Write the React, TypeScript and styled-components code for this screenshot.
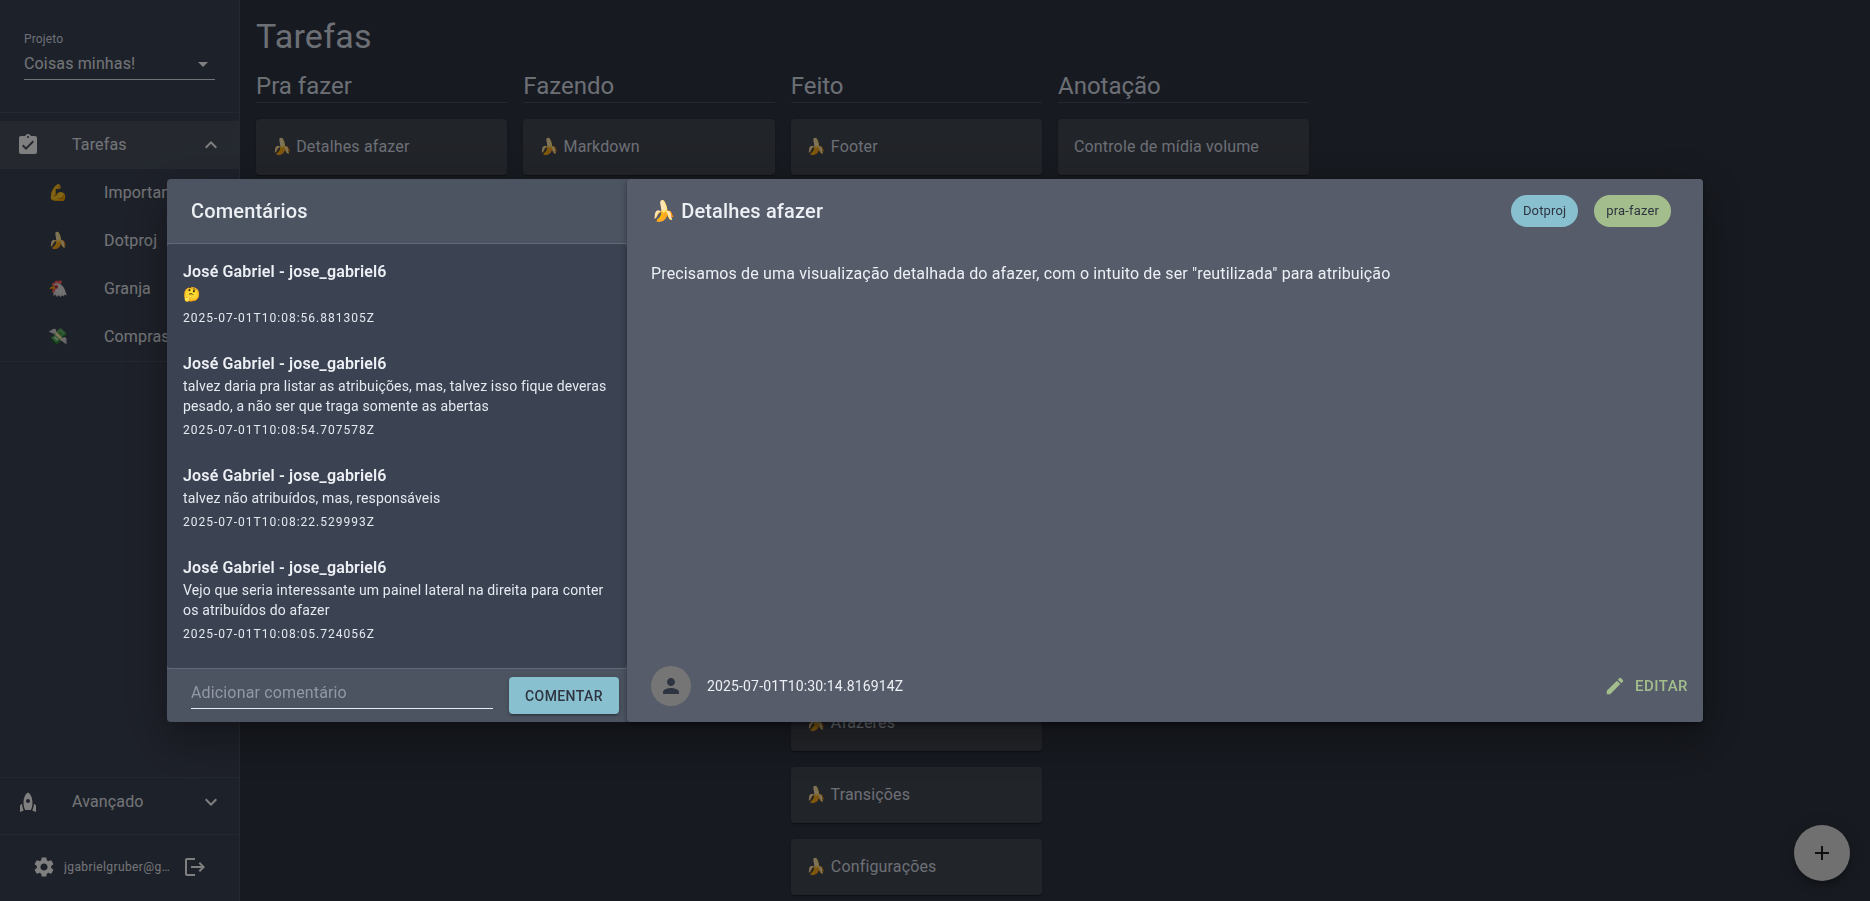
import styled, { createGlobalStyle } from "styled-components"

const GlobalStyle = createGlobalStyle`
  html, body {
    margin: 0;
    padding: 0;
    height: 100%;
    background: #2e3440;
    color: #d8dee9;
    font-family: Roboto, "Noto Color Emoji", sans-serif;
    line-height: 1.5;
    letter-spacing: 0.15px;
  }
  * {
    box-sizing: border-box;
  }
`

const paths = {
  tasks:
    "M19 3h-4.18C14.4 1.84 13.3 1 12 1c-1.3 0-2.4.84-2.82 2H5c-1.1 0-2 .9-2 2v14c0 1.1.9 2 2 2h14c1.1 0 2-.9 2-2V5c0-1.1-.9-2-2-2zm-7 0c.55 0 1 .45 1 1s-.45 1-1 1-1-.45-1-1 .45-1 1-1zm-2 14l-4-4 1.41-1.41L10 14.17l6.59-6.59L18 9l-8 8z",
  rocket:
    "M12 2.5s4.5 2.04 4.5 10.5c0 2.49-1.04 5.57-1.6 7H9.1c-.56-1.43-1.6-4.51-1.6-7C7.5 4.54 12 2.5 12 2.5zm2 8.5c0-1.1-.9-2-2-2s-2 .9-2 2 .9 2 2 2 2-.9 2-2zm-6.31 9.52c-.48-1.23-1.52-4.17-1.67-6.87l-1.13.75c-.56.38-.89 1-.89 1.67V22l3.69-1.48zM20 22v-5.93c0-.67-.33-1.29-.89-1.66l-1.13-.75c-.15 2.69-1.2 5.64-1.67 6.87L20 22z",
  less: "M12 8l-6 6 1.41 1.41L12 10.83l4.59 4.58L18 14z",
  more: "M16.59 8.59 12 13.17 7.41 8.59 6 10l6 6 6-6z",
  settings:
    "M19.14 12.94c.04-.3.06-.61.06-.94 0-.32-.02-.64-.07-.94l2.03-1.58c.18-.14.23-.41.12-.61l-1.92-3.32c-.12-.22-.37-.29-.59-.22l-2.39.96c-.5-.38-1.03-.7-1.62-.94l-.36-2.54c-.04-.24-.24-.41-.48-.41h-3.84c-.24 0-.43.17-.47.41l-.36 2.54c-.59.24-1.13.57-1.62.94l-2.39-.96c-.22-.08-.47 0-.59.22L2.74 8.87c-.12.21-.08.47.12.61l2.03 1.58c-.05.3-.09.63-.09.94s.02.64.07.94l-2.03 1.58c-.18.14-.23.41-.12.61l1.92 3.32c.12.22.37.29.59.22l2.39-.96c.5.38 1.03.7 1.62.94l.36 2.54c.05.24.24.41.48.41h3.84c.24 0 .44-.17.47-.41l.36-2.54c.59-.24 1.13-.56 1.62-.94l2.39.96c.22.08.47 0 .59-.22l1.92-3.32c.12-.22.07-.47-.12-.61l-2.01-1.58zM12 15.6c-1.98 0-3.6-1.62-3.6-3.6s1.62-3.6 3.6-3.6 3.6 1.62 3.6 3.6-1.62 3.6-3.6 3.6z",
  logout:
    "M17 7l-1.41 1.41L18.17 11H8v2h10.17l-2.58 2.58L17 17l5-5zM4 5h8V3H4c-1.1 0-2 .9-2 2v14c0 1.1.9 2 2 2h8v-2H4V5z",
  person:
    "M12 12c2.21 0 4-1.79 4-4s-1.79-4-4-4-4 1.79-4 4 1.79 4 4 4zm0 2c-2.67 0-8 1.34-8 4v2h16v-2c0-2.66-5.33-4-8-4z",
  edit: "M3 17.25V21h3.75L17.81 9.94l-3.75-3.75L3 17.25zM20.71 7.04c.39-.39.39-1.02 0-1.41l-2.34-2.34a.9959.9959 0 0 0-1.41 0l-1.83 1.83 3.75 3.75 1.83-1.83z",
  add: "M19 13h-6v6h-2v-6H5v-2h6V5h2v6h6v2z",
  drop: "M7 10l5 5 5-5z",
}

function Icon({ name }: { name: keyof typeof paths }) {
  return (
    <Svg viewBox="0 0 24 24" fill="currentColor">
      <path d={paths[name]} />
    </Svg>
  )
}

const columns = [
  { title: "Pra fazer", cards: ["🍌 Detalhes afazer"] },
  { title: "Fazendo", cards: ["🍌 Markdown"] },
  {
    title: "Feito",
    cards: [
      "🍌 Footer",
      "🍌",
      "🍌",
      "🍌",
      "🍌",
      "🍌",
      "🍌",
      "🍌",
      "🍌 Afazeres",
      "🍌 Transições",
      "🍌 Configurações",
    ],
  },
  { title: "Anotação", cards: ["Controle de mídia volume"] },
]

const projects = [
  { emoji: "💪", name: "Importantes" },
  { emoji: "🍌", name: "Dotproj" },
  { emoji: "🐔", name: "Granja" },
  { emoji: "💸", name: "Compras" },
]

const comments = [
  {
    body: "🤔",
    date: "2025-07-01T10:08:56.881305Z",
  },
  {
    body: "talvez daria pra listar as atribuições, mas, talvez isso fique deveras pesado, a não ser que traga somente as abertas",
    date: "2025-07-01T10:08:54.707578Z",
  },
  {
    body: "talvez não atribuídos, mas, responsáveis",
    date: "2025-07-01T10:08:22.529993Z",
  },
  {
    body: "Vejo que seria interessante um painel lateral na direita para conter os atribuídos do afazer",
    date: "2025-07-01T10:08:05.724056Z",
  },
]

export default function App() {
  return (
    <>
      <GlobalStyle />
      <Layout>
        <Sidebar>
          <ProjectBlock>
            <ProjectLabel>Projeto</ProjectLabel>
            <ProjectSelect>
              Coisas minhas!
              <Icon name="drop" />
            </ProjectSelect>
          </ProjectBlock>
          <NavList>
            <NavRow $selected>
              <NavIcon>
                <Icon name="tasks" />
              </NavIcon>
              <NavText>Tarefas</NavText>
              <Icon name="less" />
            </NavRow>
            {projects.map((p) => (
              <SubRow key={p.name}>
                <SubEmoji>{p.emoji}</SubEmoji>
                <NavText>{p.name}</NavText>
              </SubRow>
            ))}
          </NavList>
          <Spacer />
          <AdvancedBlock>
            <NavRow>
              <NavIcon>
                <Icon name="rocket" />
              </NavIcon>
              <NavText>Avançado</NavText>
              <Icon name="more" />
            </NavRow>
          </AdvancedBlock>
          <UserBar>
            <Icon name="settings" />
            <UserMail>jgabrielgruber@gmail.com</UserMail>
            <Icon name="logout" />
          </UserBar>
        </Sidebar>
        <Main>
          <PageTitle>Tarefas</PageTitle>
          <Board>
            {columns.map((col) => (
              <Column key={col.title}>
                <ColumnTitle>{col.title}</ColumnTitle>
                {col.cards.map((card, i) => (
                  <TaskCard key={i}>{card}</TaskCard>
                ))}
              </Column>
            ))}
          </Board>
        </Main>
        <Fab>
          <Icon name="add" />
        </Fab>
      </Layout>
      <Overlay>
        <Dialog>
          <CommentsPanel>
            <CommentsHead>Comentários</CommentsHead>
            <CommentList>
              {comments.map((c) => (
                <Comment key={c.date}>
                  <CommentAuthor>José Gabriel - jose_gabriel6</CommentAuthor>
                  <CommentBody>{c.body}</CommentBody>
                  <CommentDate>{c.date}</CommentDate>
                </Comment>
              ))}
            </CommentList>
            <CommentForm>
              <CommentInput placeholder="Adicionar comentário" />
              <CommentButton>Comentar</CommentButton>
            </CommentForm>
          </CommentsPanel>
          <DetailPanel>
            <DetailHead>
              <DetailTitle>🍌 Detalhes afazer</DetailTitle>
              <Chip $color="#88c0d0">Dotproj</Chip>
              <Chip $color="#a3be8c">pra-fazer</Chip>
            </DetailHead>
            <DetailBody>
              Precisamos de uma visualização detalhada do afazer, com o intuito
              de ser "reutilizada" para atribuição
            </DetailBody>
            <DetailFoot>
              <Avatar>
                <Icon name="person" />
              </Avatar>
              <DetailDate>2025-07-01T10:30:14.816914Z</DetailDate>
              <EditButton>
                <Icon name="edit" />
                Editar
              </EditButton>
            </DetailFoot>
          </DetailPanel>
        </Dialog>
      </Overlay>
    </>
  )
}

const Svg = styled.svg`
  width: 24px;
  height: 24px;
  flex-shrink: 0;
  display: block;
`

const Layout = styled.div`
  display: flex;
  height: 100vh;
  overflow: hidden;
`

const Sidebar = styled.aside`
  width: 240px;
  flex-shrink: 0;
  display: flex;
  flex-direction: column;
  background: #3b4252;
  border-right: 1px solid #4c5361;
  color: #e5e9f0;
`

const ProjectBlock = styled.div`
  height: 113px;
  padding: 31px 24px 0;
  border-bottom: 1px solid #4a5160;
`

const ProjectLabel = styled.div`
  font-size: 12px;
  line-height: 16px;
  color: #d8dee9;
`

const ProjectSelect = styled.div`
  display: flex;
  align-items: center;
  justify-content: space-between;
  width: 191px;
  height: 32px;
  margin-top: 1px;
  font-size: 16px;
  border-bottom: 1px solid #e5e9f0;
  svg {
    color: #fff;
  }
`

const NavList = styled.nav`
  padding-top: 8px;
  border-bottom: 1px solid #4a5160;
`

const NavRow = styled.div<{ $selected?: boolean }>`
  display: flex;
  align-items: center;
  height: 48px;
  padding: 0 16px;
  background: ${(p) => (p.$selected ? "#4a515f" : "transparent")};
  svg {
    color: #fff;
  }
`

const NavIcon = styled.div`
  width: 56px;
  flex-shrink: 0;
`

const NavText = styled.span`
  flex: 1;
  font-size: 16px;
  white-space: nowrap;
`

const SubRow = styled.div`
  display: flex;
  align-items: center;
  height: 48px;
  padding-left: 48px;
`

const SubEmoji = styled.span`
  width: 56px;
  flex-shrink: 0;
  font-size: 16px;
`

const Spacer = styled.div`
  flex: 1;
`

const AdvancedBlock = styled.div`
  padding-bottom: 8px;
  border-top: 1px solid #4a5160;
  border-bottom: 1px solid #4a5160;
`

const UserBar = styled.div`
  display: flex;
  align-items: center;
  height: 66px;
  padding: 0 0 3px 32px;
  svg {
    color: #fff;
  }
`

const UserMail = styled.span`
  width: 108px;
  margin: 0 11px 0 8px;
  font-size: 12px;
  letter-spacing: 0.4px;
  white-space: nowrap;
  overflow: hidden;
  text-overflow: ellipsis;
`

const Main = styled.main`
  flex: 1;
  padding: 16px;
  overflow: hidden;
`

const PageTitle = styled.h1`
  margin: 0;
  font-size: 34px;
  line-height: 40px;
  font-weight: 400;
  letter-spacing: 0.25px;
`

const Board = styled.div`
  display: grid;
  grid-template-columns: repeat(4, 251.33px);
  column-gap: 16px;
  align-items: start;
  margin-top: 14px;
`

const Column = styled.section`
  display: flex;
  flex-direction: column;
  gap: 16px;
`

const ColumnTitle = styled.h2`
  height: 33px;
  margin: 0;
  font-size: 24px;
  line-height: 32px;
  font-weight: 400;
  letter-spacing: 0;
  border-bottom: 1px solid #4a5160;
`

const TaskCard = styled.div`
  display: flex;
  align-items: center;
  height: 56px;
  flex-shrink: 0;
  padding: 0 16px;
  font-size: 16px;
  color: #d8dee9;
  background: #434852;
  border-radius: 4px;
  box-shadow: 0 2px 1px -1px rgba(0, 0, 0, 0.2), 0 1px 1px rgba(0, 0, 0, 0.14),
    0 1px 3px rgba(0, 0, 0, 0.12);
`

const Fab = styled.div`
  position: fixed;
  right: 20px;
  bottom: 20px;
  width: 56px;
  height: 56px;
  display: flex;
  align-items: center;
  justify-content: center;
  border-radius: 50%;
  background: #e0e0e0;
  color: #1f1f1f;
  box-shadow: 0 3px 5px -1px rgba(0, 0, 0, 0.2), 0 6px 10px rgba(0, 0, 0, 0.14),
    0 1px 18px rgba(0, 0, 0, 0.12);
`

const Overlay = styled.div`
  position: fixed;
  inset: 0;
  display: flex;
  align-items: center;
  justify-content: center;
  background: rgba(0, 0, 0, 0.5);
`

const Dialog = styled.div`
  display: grid;
  grid-template-columns: 460px 1fr;
  width: 1536px;
  height: 543px;
  border-radius: 4px;
  background: #4c5361;
  color: #eceff4;
  box-shadow: 0 11px 15px -7px rgba(0, 0, 0, 0.2),
    0 24px 38px 3px rgba(0, 0, 0, 0.14), 0 9px 46px 8px rgba(0, 0, 0, 0.12);
`

const CommentsPanel = styled.div`
  display: flex;
  flex-direction: column;
  min-height: 0;
`

const CommentsHead = styled.div`
  flex-shrink: 0;
  height: 65px;
  padding: 0 24px 1px;
  display: flex;
  align-items: center;
  font-size: 20px;
  font-weight: 500;
  border-bottom: 1px solid #626875;
`

const CommentList = styled.div`
  flex: 1;
  min-height: 0;
  padding: 16px 16px 0;
  overflow: hidden;
  background: #3b4252;
  border-radius: 4px;
`

const Comment = styled.article`
  margin-bottom: 24px;
`

const CommentAuthor = styled.div`
  font-size: 16px;
  line-height: 24px;
  font-weight: 600;
`

const CommentBody = styled.div`
  font-size: 14px;
  line-height: 20px;
  color: #e5e9f0;
`

const CommentDate = styled.div`
  margin-top: 4px;
  font-size: 12px;
  line-height: 20px;
  letter-spacing: 1px;
  color: #e5e9f0;
`

const CommentForm = styled.div`
  flex-shrink: 0;
  height: 54px;
  display: flex;
  align-items: center;
  padding: 0 8px 0 24px;
  gap: 16px;
  border-top: 1px solid #626875;
`

const CommentInput = styled.input`
  align-self: flex-start;
  width: 302px;
  height: 32px;
  margin-top: 8px;
  padding: 0;
  font: 16px Roboto, sans-serif;
  letter-spacing: 0.15px;
  color: #eceff4;
  background: transparent;
  border: 0;
  border-bottom: 1px solid #e5e9f0;
  outline: none;
  &::placeholder {
    color: #9298a4;
    opacity: 1;
  }
`

const CommentButton = styled.button`
  width: 110px;
  height: 37px;
  padding: 0;
  font: 500 14px Roboto, sans-serif;
  letter-spacing: 0.4px;
  text-transform: uppercase;
  color: #2e3440;
  background: #88c0d0;
  border: 0;
  border-radius: 4px;
  box-shadow: 0 3px 1px -2px rgba(0, 0, 0, 0.2), 0 2px 2px rgba(0, 0, 0, 0.14),
    0 1px 5px rgba(0, 0, 0, 0.12);
`

const DetailPanel = styled.div`
  position: relative;
  display: flex;
  flex-direction: column;
  min-height: 0;
  background: #565c6a;
  border-radius: 4px;
  box-shadow: 0 2px 4px -1px rgba(0, 0, 0, 0.2), 0 4px 5px rgba(0, 0, 0, 0.14),
    0 1px 10px rgba(0, 0, 0, 0.12);
`

const DetailHead = styled.div`
  display: flex;
  align-items: center;
  gap: 16px;
  height: 64px;
  padding: 0 32px 0 24px;
`

const DetailTitle = styled.div`
  flex: 1;
  font-size: 20px;
  font-weight: 500;
`

const Chip = styled.span<{ $color: string }>`
  display: flex;
  align-items: center;
  height: 32px;
  padding: 0 12px;
  font-size: 13px;
  color: #2e3440;
  background: ${(p) => p.$color};
  border-radius: 16px;
`

const DetailBody = styled.div`
  flex: 1;
  padding: 19px 24px 0;
  font-size: 16px;
  line-height: 24px;
`

const DetailFoot = styled.div`
  display: flex;
  align-items: center;
  padding: 0 8px 16px 24px;
`

const Avatar = styled.div`
  width: 40px;
  height: 40px;
  display: flex;
  align-items: center;
  justify-content: center;
  border-radius: 50%;
  background: #757575;
  color: #2e3440;
`

const DetailDate = styled.div`
  flex: 1;
  margin-left: 16px;
  font-size: 14px;
`

const EditButton = styled.div`
  display: flex;
  align-items: center;
  gap: 9px;
  padding-right: 7px;
  font-size: 15px;
  font-weight: 500;
  letter-spacing: 0.46px;
  text-transform: uppercase;
  color: #a3be8c;
  svg {
    width: 22px;
    height: 22px;
  }
`
